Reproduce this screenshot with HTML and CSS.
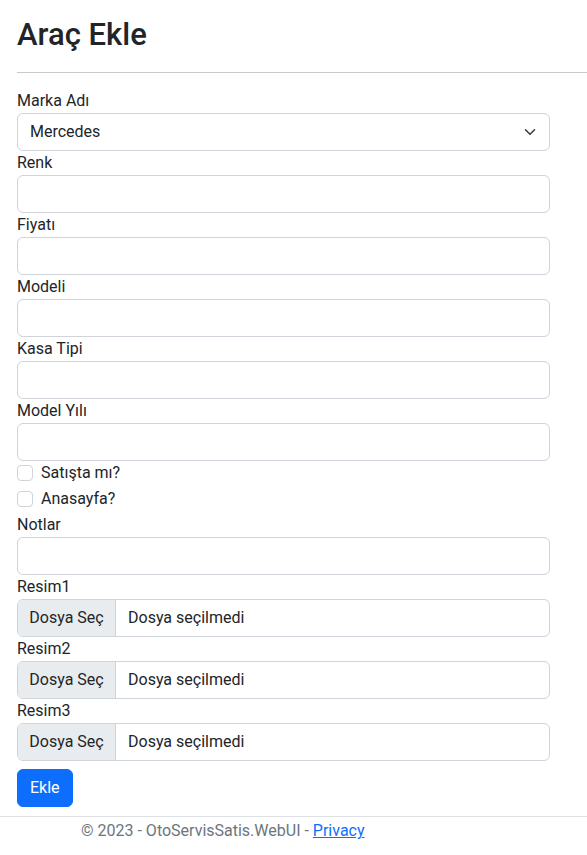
FILE: index.html
```html
<!DOCTYPE html>
<html lang="tr">
<head>
<meta charset="utf-8">
<title>Araç Ekle</title>
<link rel="stylesheet" href="styles.css">
</head>
<body>
<main class="page">
  <h1 class="title">Araç Ekle</h1>
  <hr class="divider">
  <form class="form">
    <label class="label">Marka Adı</label>
    <div class="select-wrap">
      <select class="control select">
        <option>Mercedes</option>
      </select>
      <svg class="chevron" width="16" height="12" viewBox="0 0 16 16"><path d="m2 5 6 6 6-6" fill="none" stroke="#343a40" stroke-linecap="round" stroke-linejoin="round" stroke-width="2"/></svg>
    </div>
    <label class="label">Renk</label>
    <input class="control" type="text">
    <label class="label">Fiyatı</label>
    <input class="control" type="text">
    <label class="label">Modeli</label>
    <input class="control" type="text">
    <label class="label">Kasa Tipi</label>
    <input class="control" type="text">
    <label class="label">Model Yılı</label>
    <input class="control" type="text">
    <div class="check"><input class="check-box" type="checkbox"><label class="check-label">Satışta mı?</label></div>
    <div class="check"><input class="check-box" type="checkbox"><label class="check-label">Anasayfa?</label></div>
    <label class="label">Notlar</label>
    <input class="control" type="text">
    <label class="label">Resim1</label>
    <div class="control file"><span class="file-btn">Dosya Seç</span><span class="file-name">Dosya seçilmedi</span></div>
    <label class="label">Resim2</label>
    <div class="control file"><span class="file-btn">Dosya Seç</span><span class="file-name">Dosya seçilmedi</span></div>
    <label class="label">Resim3</label>
    <div class="control file"><span class="file-btn">Dosya Seç</span><span class="file-name">Dosya seçilmedi</span></div>
    <button class="btn" type="button">Ekle</button>
  </form>
</main>
<footer class="footer">
  <span>© 2023 - OtoServisSatis.WebUI - <a class="link" href="#">Privacy</a></span>
</footer>
</body>
</html>
```

FILE: styles.css
```css
* { box-sizing: border-box; }
body {
  margin: 0;
  font-family: "Segoe UI", Roboto, "Noto Sans", sans-serif;
  font-size: 16px;
  line-height: 1.5;
  color: #212529;
  background: #fff;
}
.page { padding: 16px 0 0 17px; }
.title {
  margin: 0 0 19px;
  font-size: 31px;
  font-weight: 500;
  line-height: 1.2;
}
.divider {
  margin: 16px 0;
  border: 0;
  border-top: 1px solid #c8c9ca;
}
.form {
  width: 533px;
  display: flex;
  flex-direction: column;
}
.label { display: block; height: 24px; }
.control {
  display: block;
  width: 100%;
  height: 38px;
  padding: 6px 12px;
  font: inherit;
  color: #212529;
  background: #fff;
  border: 1px solid #ced4da;
  border-radius: 6px;
  margin: 0;
}
.select-wrap { position: relative; }
.select { appearance: none; -webkit-appearance: none; padding-right: 36px; }
.chevron { position: absolute; right: 12px; top: 13px; pointer-events: none; }
.check {
  display: flex;
  align-items: flex-start;
  min-height: 24px;
  margin-bottom: 2px;
}
.check-box {
  appearance: none;
  -webkit-appearance: none;
  width: 16px;
  height: 16px;
  margin: 4px 8px 0 0;
  border: 1px solid #ced4da;
  border-radius: 4px;
  background: #fff;
}
.file { display: flex; padding: 0; overflow: hidden; }
.file-btn {
  flex: none;
  display: flex;
  align-items: center;
  justify-content: center;
  white-space: nowrap;
  width: 98px;
  background: #e9ecef;
  border-right: 1px solid #ced4da;
}
.file-name { display: flex; align-items: center; padding-left: 12px; white-space: nowrap; }
.btn {
  align-self: flex-start;
  margin-top: 8px;
  height: 38px;
  padding: 6px 12px;
  font: inherit;
  color: #fff;
  background: #0d6efd;
  border: 1px solid #0d6efd;
  border-radius: 6px;
}
.footer {
  margin-top: 9px;
  border-top: 1px solid #dee2e6;
  padding-left: 81px;
  line-height: 27px;
  color: #6c757d;
  white-space: nowrap;
}
.link { color: #0d6efd; }
```
